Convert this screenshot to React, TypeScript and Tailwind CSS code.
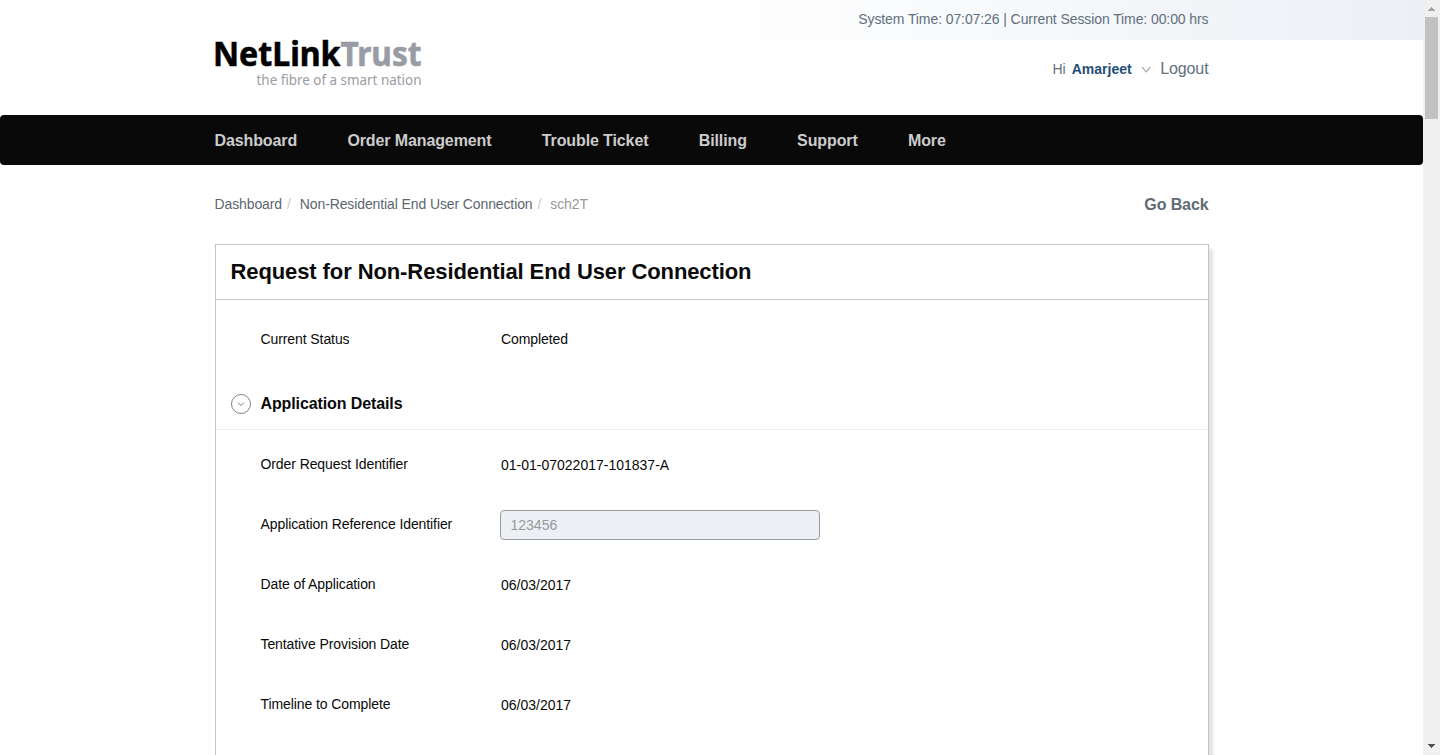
const navItems = ["Dashboard", "Order Management", "Trouble Ticket", "Billing", "Support", "More"];

const details = [
  { label: "Order Request Identifier", value: "01-01-07022017-101837-A" },
  { label: "Application Reference Identifier", value: "123456", input: true },
  { label: "Date of Application", value: "06/03/2017" },
  { label: "Tentative Provision Date", value: "06/03/2017" },
  { label: "Timeline to Complete", value: "06/03/2017" },
];

function Logo() {
  return (
    <svg
      width="220"
      height="70"
      viewBox="-5 -13 220 70"
      className="-ml-[5px] block"
      fontFamily="'Noto Sans', 'Open Sans', sans-serif"
    >
      <text x="-2" y="28" fontSize="34" fontWeight="700" fill="#000" stroke="#000" strokeWidth="0.6" textLength="127.5" lengthAdjust="spacingAndGlyphs">
        NetLink
      </text>
      <text x="125.5" y="28" fontSize="34" fontWeight="700" fill="#9a9ca5" stroke="#9a9ca5" strokeWidth="0.6" textLength="81" lengthAdjust="spacingAndGlyphs">
        Trust
      </text>
      <text x="41.5" y="46.5" fontSize="14" fill="#9a9ca5" textLength="165" lengthAdjust="spacingAndGlyphs">
        the fibre of a smart nation
      </text>
    </svg>
  );
}

function Header() {
  return (
    <header className="h-[115px] bg-[linear-gradient(to_right,#ffffff_50%,#ecf0f5)] bg-[length:100%_40px] bg-no-repeat">
      <div className="mx-auto flex w-[994px] justify-between">
        <div className="pt-[25px]">
          <Logo />
        </div>
        <div className="flex flex-col items-end text-[#5f6f7e]">
          <div className="h-10 text-sm leading-[38px] tracking-[-0.093px]">
            System Time: 07:07:26 | Current Session Time: 00:00 hrs
          </div>
          <div className="flex h-[58px] items-center text-sm">
            <span>Hi</span>
            <span className="ml-1.5 font-bold text-[#1f4e79]">Amarjeet</span>
            <svg width="10" height="8" viewBox="0 0 10 8" className="mx-[9px] mt-px" fill="none" stroke="#999ca1" strokeWidth="1.1">
              <path d="M1.2 1.2L5.2 6L9.2 1.2" />
            </svg>
            <span className="ml-[0.5px] text-base tracking-[-0.1px]">Logout</span>
          </div>
        </div>
      </div>
    </header>
  );
}

function DetailRow({ label, value, input }: { label: string; value: string; input?: boolean }) {
  return (
    <div className="flex h-[60px] items-center">
      <div className="w-60 pb-0.5 tracking-[-0.09px]">{label}</div>
      {input ? (
        <input
          disabled
          value={value}
          className="-ml-px h-[30px] w-80 rounded border border-[#999b9f] bg-[#ecf0f5] px-2.5 text-[#999]"
        />
      ) : (
        <div className="pl-[0.5px]">{value}</div>
      )}
    </div>
  );
}

function Scrollbar() {
  return (
    <div className="flex w-[17px] shrink-0 flex-col items-center bg-[#f0f0f0]">
      <svg width="17" height="17" shapeRendering="crispEdges" className="shrink-0">
        <path d="M5 11L8.5 7L12 11z" fill="#a3a3a3" />
      </svg>
      <div className="h-[102px] w-[13px] bg-[#c1c1c1]" />
      <svg width="17" height="17" shapeRendering="crispEdges" className="mt-auto shrink-0">
        <path d="M5 6L8.5 10L12 6z" fill="#505050" />
      </svg>
    </div>
  );
}

export default function App() {
  return (
    <div className="flex h-[755px] overflow-hidden bg-white font-['Liberation_Sans',Arial,sans-serif] text-[#0a0a0a]">
      <div className="w-[1423px] shrink-0">
        <Header />
        <nav className="h-[50px] rounded bg-[#090909]">
          <div className="mx-auto flex h-full w-[994px] items-center gap-[50.3px] pt-0.5 font-bold tracking-[-0.11px] text-[#ccc]">
            {navItems.map((item) => (
              <a key={item}>{item}</a>
            ))}
          </div>
        </nav>
        <main className="mx-auto w-[994px]">
          <div className="flex h-[79px] items-center text-sm tracking-[-0.11px] text-[#5b6770]">
            <div className="flex pb-0.5">
              <span>Dashboard</span>
              <span className="ml-[5px] text-[#ccc]">/</span>
              <span className="ml-[9px]">Non-Residential End User Connection</span>
              <span className="ml-[5px] text-[#ccc]">/</span>
              <span className="ml-[9px] text-[#999]">sch2T</span>
            </div>
            <span className="ml-auto text-base font-bold text-[#5f6b76]">Go Back</span>
          </div>
          <section className="h-[600px] border border-[#c3c4c8] bg-white text-sm shadow-[4px_5px_3px_#e2e2e2]">
            <h1 className="h-[55px] border-b border-[#c3c4c8] pl-[15px] text-[22px] leading-[53px] font-bold tracking-[-0.1px]">
              Request for Non-Residential End User Connection
            </h1>
            <div className="flex h-[78px] items-center pl-[45px] tracking-[-0.09px]">
              <div className="w-60">Current Status</div>
              <div className="pl-[0.5px]">Completed</div>
            </div>
            <div className="flex h-[52px] items-center border-b border-[#ececf4] pl-[15px]">
              <svg width="20" height="20" viewBox="0 0 20 20" fill="none" stroke="#7d8389">
                <circle cx="10" cy="10" r="9.5" />
                <path d="M6.8 8.5l3.2 3 3.2-3" />
              </svg>
              <h2 className="ml-2.5 text-base font-bold tracking-[-0.11px]">Application Details</h2>
            </div>
            <div className="pt-[5px] pl-[45px]">
              {details.map((row) => (
                <DetailRow key={row.label} {...row} />
              ))}
            </div>
          </section>
        </main>
      </div>
      <Scrollbar />
    </div>
  );
}
